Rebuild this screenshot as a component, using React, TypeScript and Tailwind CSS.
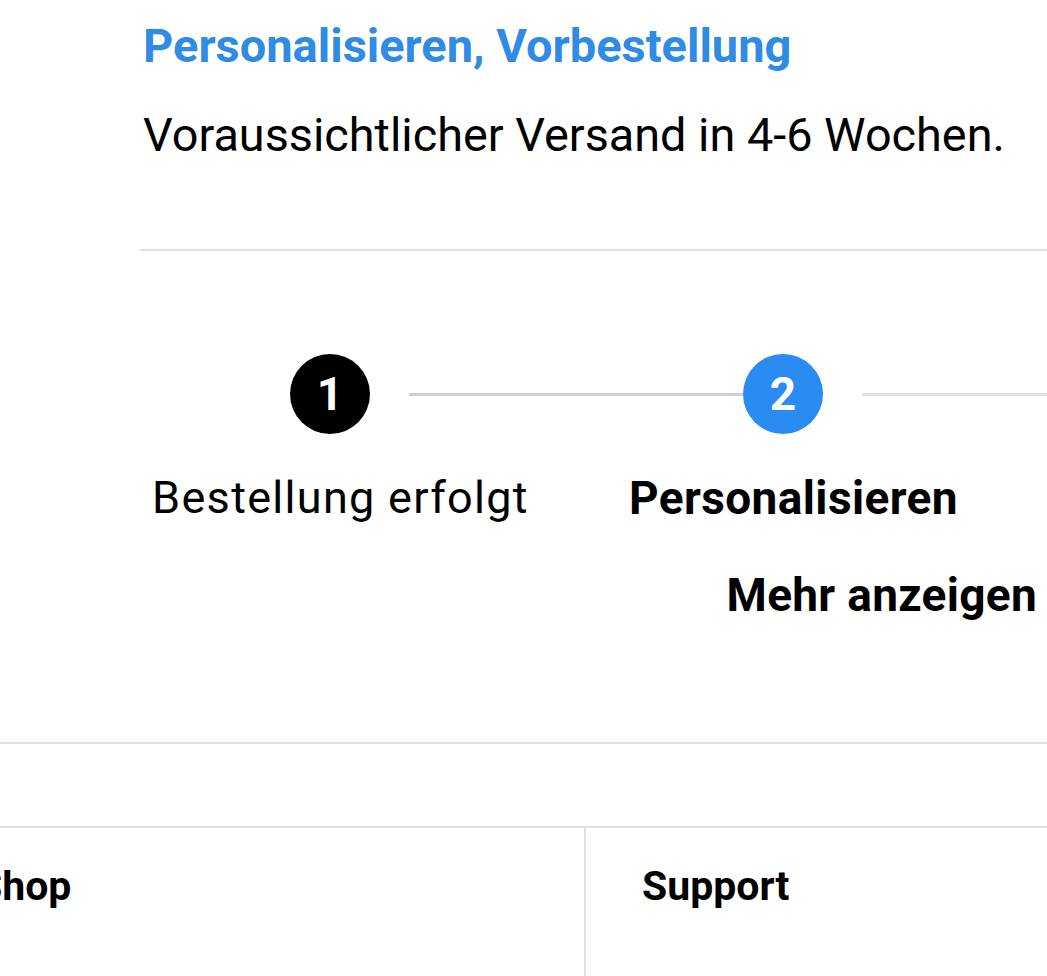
const font = { fontFamily: "Roboto, 'Noto Sans', sans-serif" };

function StepCircle({ n, active }: { n: number; active?: boolean }) {
  return (
    <div
      className={`w-[80px] h-[80px] shrink-0 rounded-full flex items-center justify-center text-white font-bold text-[46px] leading-none ${
        active ? 'bg-[#2a8cf3]' : 'bg-black'
      }`}
    >
      {n}
    </div>
  );
}

export default function App() {
  return (
    <div className="w-[1047px] h-[976px] overflow-hidden bg-white text-black" style={font}>
      <div className="pl-[140px] pt-[18px]">
        <h1 className="pl-[3px] text-[47px] leading-[56px] font-bold text-[#2f8be3] whitespace-nowrap">
          Personalisieren, Vorbestellung
        </h1>
        <p className="pl-[3px] mt-[33px] text-[46.8px] leading-[56px] whitespace-nowrap">
          Voraussichtlicher Versand in 4-6 Wochen.
        </p>
        <div className="mt-[86px] h-[2px] bg-[#e0e0e0]" />
      </div>

      <div className="mt-[103px] ml-[290px] flex items-center w-max">
        <StepCircle n={1} />
        <div className="ml-[39px] w-[334px] h-[3px] bg-[#d0d0d0]" />
        <StepCircle n={2} active />
        <div className="ml-[39px] w-[334px] h-[3px] bg-[#e2e2e2]" />
        <StepCircle n={3} />
      </div>

      <div className="mt-[38px] ml-[114px] flex w-max leading-[52px] whitespace-nowrap">
        <div className="w-[453px] text-center text-[45px] tracking-[1.3px]">Bestellung erfolgt</div>
        <div className="w-[453px] text-center text-[46px] tracking-[0.4px] font-bold">Personalisieren</div>
        <div className="w-[453px] text-center text-[45px] tracking-[1.3px]">Versand</div>
      </div>

      <div className="mt-[45px] flex justify-end pr-[10px]">
        <button className="text-[46px] leading-[52px] tracking-[0.3px] font-bold whitespace-nowrap">
          Mehr anzeigen
        </button>
      </div>

      <div className="mt-[121px] h-[2px] bg-[#e0e0e0]" />

      <div className="mt-[82px] border-t-2 border-[#e0e0e0] flex h-[200px]">
        <div className="ml-[-79px] w-[665px] shrink-0 border-r-2 border-[#e0e0e0] pl-[56px] pt-[34px] text-[41px] leading-[48px] font-bold">
          Shop
        </div>
        <div className="pl-[56px] pt-[34px] text-[41px] leading-[48px] font-bold">Support</div>
      </div>
    </div>
  );
}
